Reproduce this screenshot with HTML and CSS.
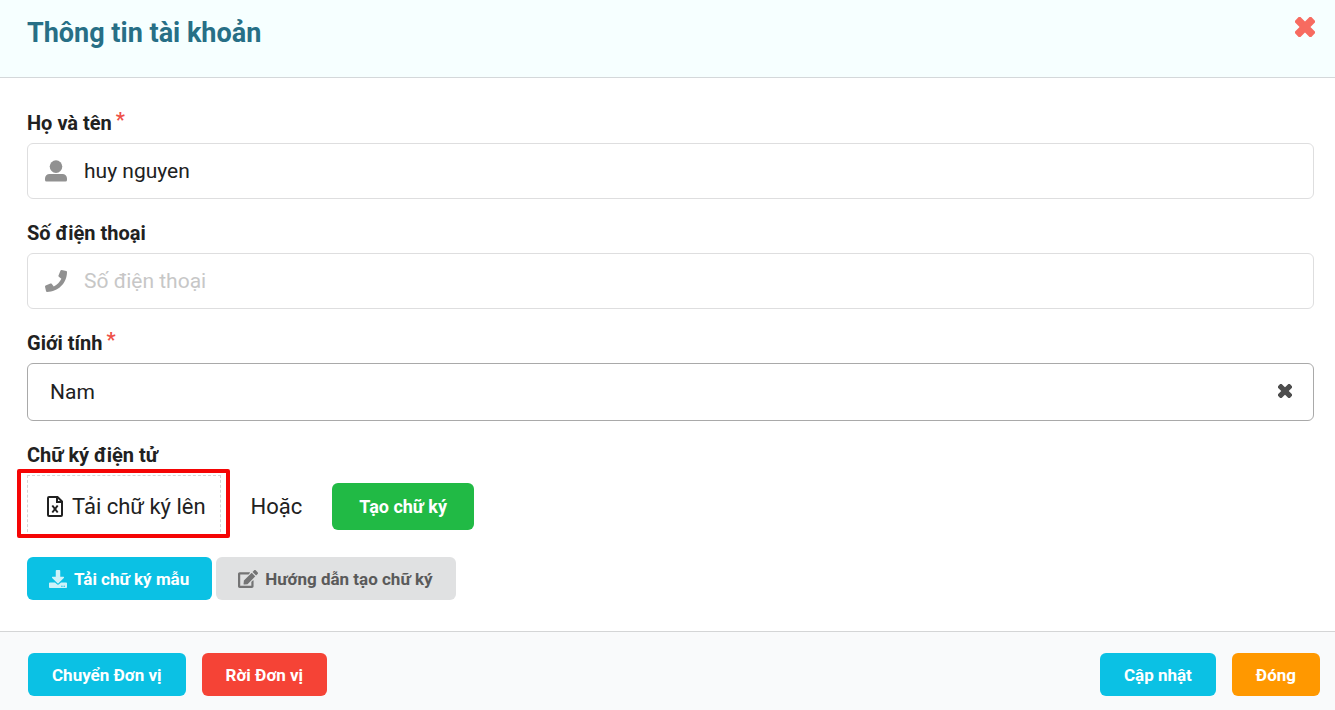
FILE: index.html
```html
<!DOCTYPE html>
<html lang="vi">
<head>
    <meta charset="UTF-8">
    <meta name="viewport" content="width=device-width, initial-scale=1.0">
    <title>Thông tin tài khoản</title>
    <link rel="stylesheet" href="styles.css">
</head>
<body>
    <form class="modal">
        <header class="modal-header">
            <h1>Thông tin tài khoản</h1>
            <button type="button" class="icon-btn close-btn" aria-label="Đóng">
                <svg viewBox="0 0 20 20" width="20" height="20"><g transform="rotate(45 10 10)"><rect x="-1.500" y="6.200" width="23" height="7.600" rx="1.300"/><rect x="6.200" y="-1.500" width="7.600" height="23" rx="1.300"/></g></svg>
            </button>
        </header>

        <main class="modal-body">
            <div class="field">
                <label for="full-name">Họ và tên<span class="required">*</span></label>
                <div class="input-box">
                    <svg class="input-icon" viewBox="0 0 22 22" width="22" height="22"><circle cx="11" cy="6.600" r="6.300"/><path d="M4.500 14h13a4.500 4.500 0 0 1 4.500 4.500v1.500a1.500 1.500 0 0 1-1.500 1.500h-19a1.500 1.500 0 0 1-1.500-1.500v-1.500a4.500 4.500 0 0 1 4.500-4.500z"/></svg>
                    <input type="text" id="full-name" value="huy nguyen">
                </div>
            </div>

            <div class="field">
                <label for="phone">Số điện thoại</label>
                <div class="input-box">
                    <svg class="input-icon" viewBox="0 0 512 512" width="22" height="22"><path d="M493.400 24.600l-104-24c-11.300-2.600-22.900 3.300-27.500 13.900l-48 112c-4.200 9.800-1.400 21.300 6.900 28l60.600 49.600c-36 76.700-98.900 140.500-177.200 177.200l-49.600-60.600c-6.800-8.300-18.200-11.100-28-6.900l-112 48C3.900 366.500-2 378.100.6 389.400l24 104C27.100 504.200 36.700 512 48 512c256.100 0 464-207.500 464-464 0-11.200-7.700-20.900-18.600-23.400z"/></svg>
                    <input type="tel" id="phone" placeholder="Số điện thoại">
                </div>
            </div>

            <div class="field">
                <label for="gender">Giới tính<span class="required">*</span></label>
                <div class="select-box">
                    <select id="gender">
                        <option selected>Nam</option>
                    </select>
                    <button type="button" class="icon-btn clear-btn" aria-label="Xóa">
                        <svg viewBox="0 0 20 20" width="14" height="14"><g transform="rotate(45 10 10)"><rect x="-2" y="6.300" width="24" height="7.400" rx="2"/><rect x="6.300" y="-2" width="7.400" height="24" rx="2"/></g></svg>
                    </button>
                </div>
            </div>

            <div class="field">
                <label for="signature">Chữ ký điện tử</label>
                <div class="signature-row">
                    <div class="upload">
                        <button type="button" id="signature" class="upload-btn">
                            <svg class="file-icon" viewBox="0 0 16 21" width="16" height="21"><path d="M2 1h8.500l4.500 4.500v13.500a1 1 0 0 1-1 1h-12a1 1 0 0 1-1-1v-17a1 1 0 0 1 1-1z"/><path d="M10 1v5h5"/><path d="M5.300 9.500l5.400 7M10.700 9.500l-5.400 7"/></svg>
                            Tải chữ ký lên
                        </button>
                    </div>
                    <span class="or">Hoặc</span>
                    <button type="button" class="btn btn-large green">Tạo chữ ký</button>
                </div>
            </div>

            <div class="sample-row">
                <button type="button" class="btn with-icon blue">
                    <svg viewBox="0 0 512 512" width="18" height="18"><path d="M216 0h80c13.300 0 24 10.700 24 24v168h87.700c17.800 0 26.700 21.500 14.100 34.100L269.700 378.300c-7.500 7.500-19.800 7.500-27.300 0L90.100 226.100c-12.600-12.600-3.700-34.100 14.100-34.100H192V24c0-13.300 10.700-24 24-24zm296 376v112c0 13.300-10.700 24-24 24H24c-13.300 0-24-10.700-24-24V376c0-13.300 10.700-24 24-24h146.700l49 49c20.100 20.100 52.500 20.100 72.600 0l49-49H488c13.300 0 24 10.700 24 24zm-124 88c0-11-9-20-20-20s-20 9-20 20 9 20 20 20 20-9 20-20zm64 0c0-11-9-20-20-20s-20 9-20 20 9 20 20 20 20-9 20-20z"/></svg>
                    Tải chữ ký mẫu
                </button>
                <button type="button" class="btn with-icon grey">
                    <svg viewBox="0 0 576 512" width="20" height="18"><path d="M402.600 83.200l90.200 90.200c3.800 3.800 3.800 10 0 13.800L274.400 405.600l-92.800 10.300c-12.400 1.400-22.900-9.100-21.500-21.500l10.300-92.800L388.800 83.200c3.800-3.800 10-3.800 13.800 0zm162-22.900l-48.800-48.800c-15.200-15.200-39.900-15.200-55.200 0l-35.400 35.400c-3.800 3.800-3.800 10 0 13.800l90.200 90.200c3.800 3.800 10 3.800 13.800 0l35.400-35.400c15.200-15.300 15.200-40 0-55.200zM384 346.200V448H64V128h229.800c3.200 0 6.200-1.300 8.500-3.500l40-40c7.600-7.600 2.200-20.500-8.500-20.500H48C21.500 64 0 85.500 0 112v352c0 26.500 21.500 48 48 48h352c26.500 0 48-21.500 48-48V306.200c0-10.700-12.900-16-20.500-8.500l-40 40c-2.200 2.300-3.500 5.300-3.500 8.500z"/></svg>
                    Hướng dẫn tạo chữ ký
                </button>
            </div>
        </main>

        <footer class="modal-footer">
            <div class="actions">
                <button type="button" class="btn blue">Chuyển Đơn vị</button>
                <button type="button" class="btn red">Rời Đơn vị</button>
            </div>
            <div class="actions">
                <button type="submit" class="btn blue">Cập nhật</button>
                <button type="button" class="btn orange">Đóng</button>
            </div>
        </footer>
    </form>
</body>
</html>
```
FILE: styles.css
```css
* {
    box-sizing: border-box;
}

body {
    margin: 0;
    background: #fff;
    color: #212121;
    font-family: Roboto, "Liberation Sans", sans-serif;
    font-size: 21px;
}

button,
input,
select {
    font: inherit;
    color: inherit;
}

button {
    cursor: pointer;
}

svg {
    display: block;
    flex: none;
    fill: currentColor;
}

.modal-header {
    display: flex;
    justify-content: space-between;
    align-items: flex-start;
    padding: 17px 20px 28px 27px;
    background: #f6ffff;
    border-bottom: 1px solid #d4d8da;
}

.modal-header h1 {
    margin: 0;
    font-size: 27px;
    line-height: 32px;
    font-weight: 700;
    color: #276f86;
}

.icon-btn {
    padding: 0;
    border: none;
    background: none;
}

.close-btn {
    color: #f76b60;
}

.modal-body {
    padding: 31px 21px 31px 27px;
}

.field {
    margin-bottom: 20px;
}

.field label {
    display: block;
    margin-bottom: 6px;
    font-size: 20px;
    line-height: 28px;
    font-weight: 700;
}

.required {
    display: inline-block;
    margin-left: 4px;
    line-height: 22px;
    vertical-align: top;
    color: #ee5148;
}

.input-box {
    display: flex;
    align-items: center;
    gap: 17px;
    height: 56px;
    padding: 0 17px;
    border: 1px solid #dededf;
    border-radius: 6px;
}

.input-icon {
    color: #919191;
}

.input-box input {
    flex: 1;
    min-width: 0;
    padding: 0;
    border: none;
    outline: none;
    background: none;
}

.input-box input::placeholder {
    color: #c7c7c7;
}

.select-box {
    position: relative;
}

.select-box select {
    display: block;
    appearance: none;
    width: 100%;
    height: 58px;
    padding: 0 22px;
    border: 1px solid #a9a9a9;
    border-radius: 6px;
    background: #fff;
}

.clear-btn {
    position: absolute;
    top: 21px;
    right: 22px;
    color: #4d4d4d;
}

.signature-row {
    display: flex;
    align-items: center;
    gap: 30px;
    font-size: 22px;
}

.upload {
    position: relative;
}

/* red frame around the upload button */
.upload::after {
    content: "";
    position: absolute;
    inset: -6px -9px -1px -10px;
    border: 4px solid #f50505;
    border-radius: 2px;
    pointer-events: none;
}

.upload-btn {
    display: flex;
    align-items: center;
    gap: 9px;
    height: 62px;
    padding: 0 14px 0 19px;
    border: 1px dashed #d5d5d6;
    background: #fff;
}

.file-icon {
    fill: none;
    stroke: currentColor;
    stroke-width: 2;
}

.btn {
    display: flex;
    align-items: center;
    justify-content: center;
    gap: 7px;
    height: 43px;
    padding: 0 24px;
    border: none;
    border-radius: 6px;
    font-size: 17px;
    font-weight: 700;
    color: #fff;
}

.btn-large {
    height: 47px;
    padding: 0 27px;
    font-size: 18px;
}

.with-icon {
    padding: 0 23px 0 22px;
}

.with-icon svg {
    opacity: 0.8;
}

.blue {
    background: #0bc1e4;
}

.green {
    background: #21ba45;
}

.grey {
    background: #e0e1e2;
    color: #5a5a5a;
}

.red {
    background: #f54336;
}

.orange {
    background: #ff9800;
}

.sample-row {
    display: flex;
    gap: 4px;
}

.modal-footer {
    display: flex;
    justify-content: space-between;
    padding: 21px 15px 14px 28px;
    background: #f9fafb;
    border-top: 1px solid #d4d5d6;
}

.actions {
    display: flex;
    gap: 16px;
}
```
